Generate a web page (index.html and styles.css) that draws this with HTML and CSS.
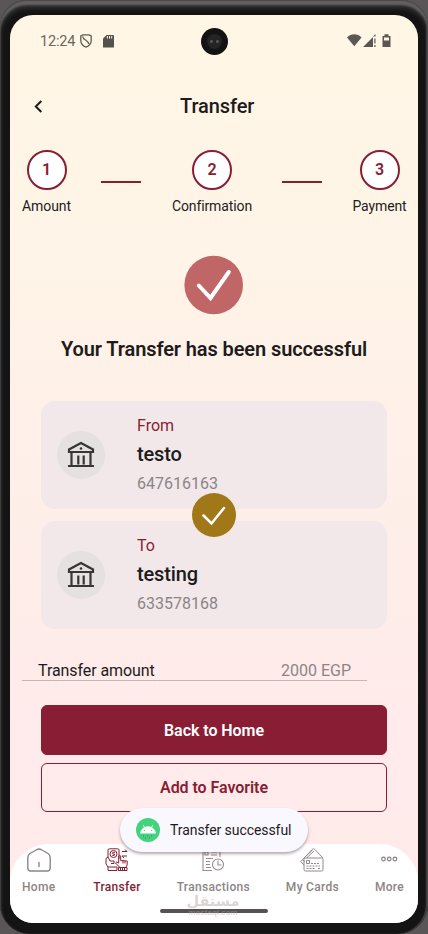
FILE: index.html
```html
<!DOCTYPE html>
<html lang="en">
<head>
<meta charset="utf-8">
<title>Transfer</title>
<link rel="stylesheet" href="styles.css">
</head>
<body>
<div class="phone">
  <main class="screen">
    <div class="status">
      <span class="time">12:24</span>
      <svg class="shield" width="12" height="14" viewBox="0 0 12 14" fill="none" stroke="#5f5b56" stroke-width="1.3"><path d="M3 .9h6L11.2 2v4.500c0 3-2 5.300-5.200 6.600C2.800 11.800.8 9.500.8 6.500V2zM2.700 2.500c.2 3.500 5.800 3.500 6 7.500"/></svg>
      <svg class="sd" width="11" height="13" viewBox="0 0 11 13"><path fill="#55524e" d="M3.500 0H10a1 1 0 0 1 1 1v11.500H0V3.500z"/><path stroke="#fff5e6" d="M4.300 1v2.600M6.500 1v2.600M8.700 1v2.600"/></svg>
      <svg class="signals" width="44" height="14" viewBox="0 0 44 14" fill="#5b5854"><path d="M0 3.500C4-.8 10.500-.8 14.500 3.500L7.300 12.300z"/><path d="M16 13 26 3v10zM26 2.500 28.500 0v2.500zM27.300 4.500h1.200v5h-1.200zM27.300 11h1.200v2h-1.200z"/><path fill-rule="evenodd" d="M37.500.3h4V2H43.500v11h-8V2h2zM37 3.500v3h5v-3z"/></svg>
      <div class="camera"><i></i></div>
    </div>
    <header class="header">
      <svg class="back" width="9" height="13" viewBox="0 0 9 13" fill="none" stroke="#1d1b1b" stroke-width="2"><path d="M7.300 1 1.800 6.500l5.500 5.500"/></svg>
      <h1>Transfer</h1>
    </header>
    <div class="stepper">
      <div class="step amount"><b>1</b><span>Amount</span></div>
      <i class="line"></i>
      <div class="step confirm"><b>2</b><span>Confirmation</span></div>
      <i class="line"></i>
      <div class="step payment"><b>3</b><span>Payment</span></div>
    </div>
    <svg class="success" width="60" height="60" viewBox="0 0 60 60"><circle cx="29.700" cy="30" r="29.300" fill="#c06667"/><path d="M14.800 30.500 26.500 43 44.800 17" fill="none" stroke="#fff" stroke-width="4" stroke-linecap="round"/></svg>
    <h2>Your Transfer has been successful</h2>
    <section class="accounts">
      <article class="card">
        <div class="bank"><svg width="28" height="28" viewBox="0 0 28 28" fill="none" stroke="#373535" stroke-width="2.200"><path d="M2 11V8.500L14 2l12 6.500V11zM4.500 11v13M23.500 11v13M11.300 14.500v9M16.700 14.500v9M1 25h26" /><circle cx="14" cy="7.500" r="1.300" fill="#373535" stroke="none"/></svg></div>
        <div class="info"><span class="label">From</span><strong>testo</strong><span class="number">647616163</span></div>
      </article>
      <article class="card">
        <div class="bank"><svg width="28" height="28" viewBox="0 0 28 28" fill="none" stroke="#373535" stroke-width="2.200"><path d="M2 11V8.500L14 2l12 6.500V11zM4.500 11v13M23.500 11v13M11.300 14.500v9M16.700 14.500v9M1 25h26" /><circle cx="14" cy="7.500" r="1.300" fill="#373535" stroke="none"/></svg></div>
        <div class="info"><span class="label">To</span><strong>testing</strong><span class="number">633578168</span></div>
      </article>
      <svg class="badge" width="44" height="44" viewBox="0 0 44 44"><circle cx="22" cy="22" r="22" fill="#a07817"/><path d="M11.500 22.500 19.500 30.500 32 15" fill="none" stroke="#fff" stroke-width="2.500" stroke-linecap="round"/></svg>
    </section>
    <div class="total"><span>Transfer amount</span><span class="value">2000 EGP</span></div>
    <button class="btn primary">Back to Home</button>
    <button class="btn outline">Add to Favorite</button>
    <nav class="nav">
      <a class="item home"><svg width="24" height="24" viewBox="0 0 24 24" fill="none" stroke="#8d8585" stroke-width="1.400" stroke-linejoin="round" stroke-linecap="round"><path d="M10 1.500 3 5.500Q.8 7 .8 9.500V20q0 3 3 3h16.400q3 0 3-3V9.500q0-2.500-2.200-4l-7-4q-2-1-4 0zM12 14.500v4"/></svg><span>Home</span></a>
      <a class="item transfer"><svg width="24" height="24" viewBox="0 0 24 24" fill="none" stroke="#891d33" stroke-width="1"><path d="M3 9V2Q3 .8 4.500.8h8Q14 .8 14 2v9M1 10.500V16l2 3v3.500h9V19H3M1 10.500l2-1.500 2 4h4v2.500H6M17 3.500h5l-2-2M22 8h-5l2 2M14.500 19l-4-4q1-2 3.200 0V8q1-1.500 2 0v4.500l6.500.5v4l-1.500 2.500M13.500 19.500H22v3h-8.500zM15.500 20v2M17.500 20v2M19.500 20v2M18 13v2.500M20 13v2.500"/><circle cx="8.500" cy="6" r="3.500"/><path d="M10 4.500Q7.500 3.500 7.500 5t2 1.200q1 1.500-2.200 1.300"/></svg><span>Transfer</span></a>
      <a class="item transactions"><svg width="24" height="24" viewBox="0 0 24 24" fill="none" stroke="#9a8b8d" stroke-width="1.100"><path d="M2 1h17v8M2 1v21.500h9M4 4h3v3H4zM10 4h6M10 7h6M5 10.500h7M5 13.500h4M5 16.500h4M5 19.500h5"/><circle cx="17" cy="16.500" r="5.500"/><path d="M17 12.500V17h3.500"/></svg><span>Transactions</span></a>
      <a class="item cards"><svg width="24" height="24" viewBox="0 0 24 24" fill="none" stroke="#91888a" stroke-width="1"><path d="M5.500 23q-1.500 0-1.500-1.500v-10Q4 10 5.500 10h16q1.500 0 1.500 1.500v10q0 1.500-1.500 1.500zM4 17 .7 13.500 12.500 1.200q1-1 2 0L23 10M2.500 11.500 4.800 14M4.500 9.500 12.500 2M6.500 10 14 3M6.500 12.500h3v3h-3z"/><path d="M6.500 18H20M6.500 20.500h8M18 20.500h2M11 15.500h9" stroke-dasharray="2 1"/></svg><span>My Cards</span></a>
      <a class="item more"><svg width="18" height="24" viewBox="0 0 18 24" fill="none" stroke="#858080" stroke-width="1.200"><circle cx="3.500" cy="11" r="1.800"/><circle cx="9.200" cy="11" r="1.800"/><circle cx="14.900" cy="11" r="1.800"/></svg><span>More</span></a>
      <div class="handle"></div>
      <div class="watermark"><span lang="ar">مستقل</span><small>mostaql.com</small></div>
    </nav>
    <div class="toast"><svg width="24" height="24" viewBox="0 0 24 24"><circle cx="12" cy="12" r="12" fill="#43d27e"/><path d="M4 15.500q.5-4 4-6L6.800 7.300l.6-.4L8.700 9q3.300-1.300 6.600 0l1.300-2.100.6.400L16 9.500q3.500 2 4 6z" fill="#fff"/><path d="M8 12.500h1M15 12.500h1" stroke="#43d27e"/><path d="M7 18h1M11 18h1M15 18h1M9 20h1M13 20h1" stroke="#35875b"/></svg><span>Transfer successful</span></div>
  </main>
</div>
</body>
</html>
```
FILE: styles.css
```css
* { box-sizing: border-box; }
html { background: #5a5657; }
body { margin: 0; width: 428px; height: 934px; overflow: hidden; font-family: Roboto, sans-serif; color: #1d1b1b; }
h1, h2 { margin: 0; }
.phone { width: 428px; height: 934px; padding: 15px 10px 11px; background: #141414; border-radius: 27px 27px 30px 30px; box-shadow: inset 0 1px 1px #4b4849, inset 0 5px 2px #626061, inset 0 8px 5px #383737, inset -2px 0 1px #444243, inset 1px 0 1px #333; }
.screen { position: relative; width: 408px; height: 908px; border-radius: 23px; overflow: hidden; display: flex; flex-direction: column; background: linear-gradient(#fff6e5 0%, #fff5e7 20%, #feede9 62%, #ffebeb 78%, #ffeaea 100%); }
.status { position: relative; flex: none; height: 52px; display: flex; align-items: center; padding: 0 27px 0 30px; }
.time { font-size: 14.500px; color: #6b6661; width: 40px; letter-spacing: -.2px; }
.sd { margin-left: 11px; }
.signals { margin-left: auto; }
.camera { position: absolute; left: 191px; top: 13px; width: 27px; height: 27px; border-radius: 50%; background: #131313; display: grid; place-items: center; }
.camera i { width: 15px; height: 15px; border-radius: 50%; background: radial-gradient(circle at 30% 50%, #555 0 1px, transparent 2px), radial-gradient(circle at 70% 50%, #555 0 1px, transparent 2px), #242424; }
.header { flex: none; height: 83px; padding: 0 0 5px 24px; display: flex; align-items: center; }
.header h1 { font-size: 20px; line-height: 26px; font-weight: 500; margin-left: 137px; letter-spacing: -.1px; }
.stepper { flex: none; height: 80px; display: flex; align-items: flex-start; padding-left: 12px; }
.step { display: flex; flex-direction: column; align-items: center; font-size: 14px; letter-spacing: -.1px; }
.step.amount { width: 49px; }
.step.confirm { width: 80px; margin: 0 30px 0 31px; }
.step.payment { width: 55px; margin-left: 30px; }
.step b { width: 40px; height: 40px; border: 2px solid #891d33; border-radius: 50%; background: #fff; color: #891d33; font-size: 16px; font-weight: 600; line-height: 36px; text-align: center; }
.step span { margin-top: 8px; line-height: 16px; white-space: nowrap; }
.line { height: 2px; width: 40px; background: #891d33; margin-top: 31px; }
.step.amount + .line { margin-left: 30px; }
.success { flex: none; margin: 25px 0 0 174px; }
h2 { font-size: 20px; line-height: 24px; font-weight: 600; margin-top: 22px; text-align: center; white-space: nowrap; letter-spacing: -.1px; }
.accounts { position: relative; flex: none; margin: 40px 31px 0; display: grid; gap: 12px; }
.card { height: 108px; background: #f2e8ea; border-radius: 14px; display: flex; padding: 0 16px; align-items: center; }
.bank { width: 48px; height: 48px; border-radius: 50%; background: #e5e1e1; display: grid; place-items: center; padding-bottom: 1px; }
.info { margin: 0 0 1px 32px; display: flex; flex-direction: column; position: relative; padding-bottom: 1px; }
.label { font-size: 16px; line-height: 20px; color: #891d33; }
.info strong { font-size: 20px; font-weight: 500; line-height: 24px; margin: 6px 0 9px; letter-spacing: -.15px; }
.number { font-size: 16px; line-height: 18px; color: #8b8586; }
.badge { position: absolute; left: 151px; top: 92px; }
.total { flex: none; height: 22px; margin: 30px 51px 0 12px; padding: 0 16px; border-bottom: 1px solid #c9b6b7; display: flex; justify-content: space-between; font-size: 16px; line-height: 24px; letter-spacing: -.08px; }
.value { color: #8b8586; letter-spacing: 0; }
.btn { flex: none; margin: 24px 31px 0; height: 50px; border: 1.500px solid #891d33; border-radius: 6px; font: 600 16px Roboto, sans-serif; letter-spacing: -.05px; color: #891d33; background: transparent; padding: 0; }
.btn.primary { color: #fff; background: #891d33; }
.btn.outline { margin-top: 8px; height: 49px; }
.nav { position: relative; margin-top: auto; height: 79px; background: #fff; border-radius: 38px 38px 0 0; flex: none; display: flex; justify-content: space-between; padding: 4px 14px 0 12px; color: #8d8585; }
.item { display: flex; flex-direction: column; align-items: center; font-size: 12px; font-weight: 500; letter-spacing: .3px; }
.item span { margin-top: 8px; line-height: 14px; white-space: nowrap; }
.transfer { color: #891d33; margin-left: 2px; }
.handle { position: absolute; left: 150px; top: 65px; width: 108px; height: 4px; border-radius: 2px; background: #565254; }
.watermark { position: absolute; left: 177px; top: 49px; width: 52px; height: 24px; display: flex; flex-direction: column; align-items: center; color: rgba(180,165,167,.48); font: bold 14.500px/16px "DejaVu Sans", sans-serif; }
.watermark small { font: bold 8px/8px "Liberation Sans", sans-serif; }
.toast { position: absolute; left: 110px; top: 793px; width: 188px; height: 44px; border-radius: 22px; background: #f9f8ff; box-shadow: 0 2px 3px rgba(70,45,55,.4); display: flex; align-items: center; padding-left: 16px; font-size: 14px; gap: 10px; white-space: nowrap; letter-spacing: -.07px; }
```
